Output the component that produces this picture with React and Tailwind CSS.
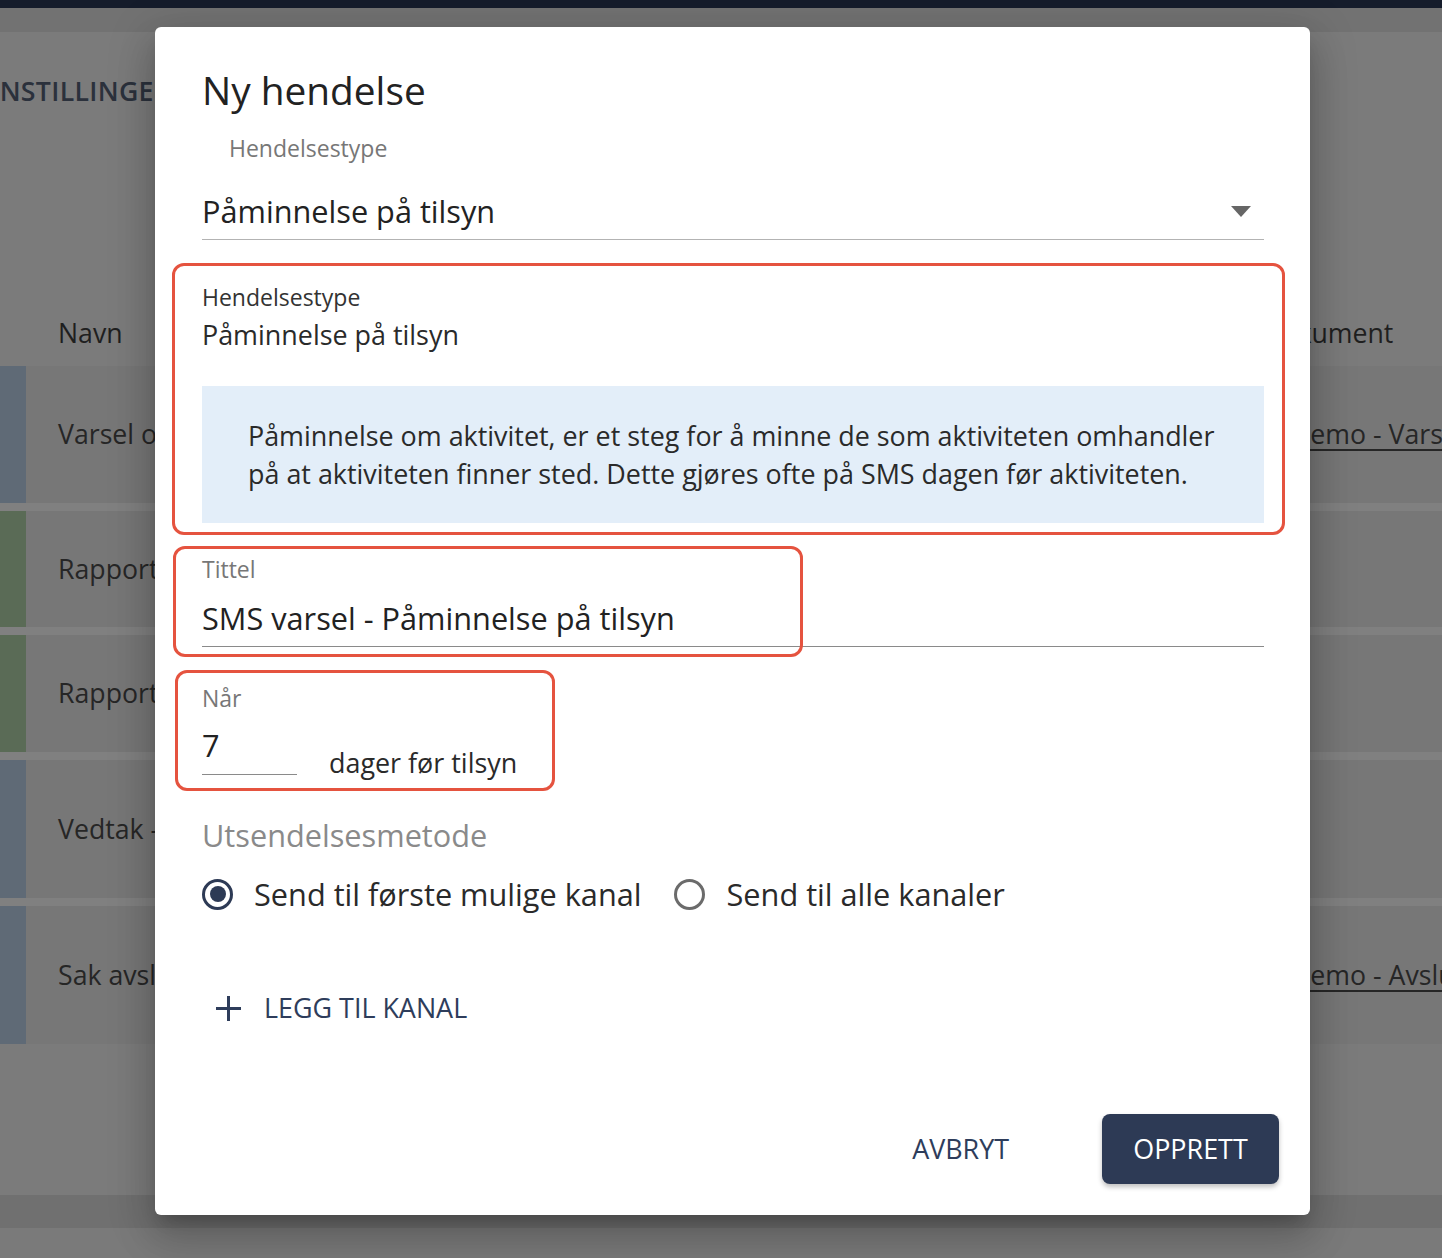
const rows = [
  { h: "h-[137px]", strip: "bg-[#5f6a76]", name: "Varsel om tilsyn", doc: "Demo - Varsel om tilsyn" },
  { h: "h-[116px]", strip: "bg-[#5a6b56]", name: "Rapport fra tilsyn", doc: "" },
  { h: "h-[117px]", strip: "bg-[#5a6b56]", name: "Rapport etter tilsyn", doc: "" },
  { h: "h-[138px]", strip: "bg-[#5f6a76]", name: "Vedtak - pålegg", doc: "" },
  { h: "h-[138px]", strip: "bg-[#5f6a76]", name: "Sak avsluttet", doc: "Demo - Avslutning av sak" },
];

function Background() {
  return (
    <div>
      <div className="h-[8px] bg-[#151c2b]" />
      <div className="h-[24px] bg-[#727272]" />
      <div className="bg-[#7b7b7b]">
        <div className="flex h-[118px] items-center">
          <span className="-ml-[30px] shrink-0 text-[26.7px] font-semibold tracking-[0.3px] uppercase text-[#2b313c] whitespace-nowrap">
            Innstillinger
          </span>
        </div>
        <div className="h-[150px]" />
        <div className="flex h-[66px] items-center text-[26.7px] text-[#1f1f1f]">
          <div className="w-[1262px] shrink-0 pl-[58px]">Navn</div>
          <div className="shrink-0 whitespace-nowrap">Dokument</div>
        </div>
        {rows.map((r, i) => (
          <div key={i}>
            {i > 0 && <div className="h-[8px] bg-[#808080]" />}
            <div className={`flex ${r.h} items-center overflow-hidden bg-[#777777] text-[26.7px] text-[#262626]`}>
              <div className={`h-full w-[26px] shrink-0 ${r.strip}`} />
              <div className="w-[1236px] shrink-0 pl-[32px] whitespace-nowrap">{r.name}</div>
              {r.doc && (
                <div className="shrink-0 pl-[29px] whitespace-nowrap underline decoration-[2px] underline-offset-[5px]">
                  {r.doc}
                </div>
              )}
            </div>
          </div>
        ))}
        <div className="h-[151px]" />
      </div>
      <div className="h-[33px] bg-[#707070]" />
    </div>
  );
}

function RedBox({ className }) {
  return (
    <div
      className={`pointer-events-none absolute rounded-[12px] border-[3px] border-[#e5533f] ${className}`}
    />
  );
}

function Dialog() {
  return (
    <div className="absolute left-[155px] top-[27px] flex h-[1188px] w-[1155px] flex-col rounded-[6px] bg-white shadow-[0_11px_15px_-7px_rgba(0,0,0,0.2),0_24px_38px_3px_rgba(0,0,0,0.14),0_9px_46px_8px_rgba(0,0,0,0.12)]">
      <div className="flex flex-col pl-[47px] pr-[46px]">
        <h2 className="pt-[39px] text-[38.8px] leading-[48px] text-[#222]">Ny hendelse</h2>

        <div className="mt-[19px] pl-[27px] text-[23px] leading-[30px] text-[#777]">Hendelsestype</div>
        <div className="mt-[28px] flex items-center justify-between border-b border-[#b3b3b3] pb-[8px]">
          <span className="text-[30.7px] leading-[40px] text-[#222]">Påminnelse på tilsyn</span>
          <svg width="20" height="11" viewBox="0 0 20 11" className="mr-[13px]">
            <path d="M0 0 L20 0 L10 11 Z" fill="#666" />
          </svg>
        </div>

        <div className="relative mt-[42px]">
          <RedBox className="-top-[19px] -bottom-[12px] -left-[30px] -right-[21px]" />
          <div className="text-[23px] leading-[30px] text-[#333]">Hendelsestype</div>
          <div className="mt-[5px] text-[26.9px] leading-[36px] text-[#2a2a2a]">Påminnelse på tilsyn</div>
          <div className="mt-[33px] bg-[#e3eef9] pl-[46px] pr-[40px] pt-[31px] pb-[30px] text-[26.9px] leading-[38px] text-[#2a2a2a]">
            Påminnelse om aktivitet, er et steg for å minne de som aktiviteten omhandler på at aktiviteten finner
            sted. Dette gjøres ofte på SMS dagen før aktiviteten.
          </div>
        </div>

        <div className="relative mt-[31px]">
          <RedBox className="-top-[8px] -left-[29px] h-[111px] w-[630px]" />
          <div className="text-[23px] leading-[30px] text-[#777]">Tittel</div>
          <div className="mt-[14px] border-b border-[#8a8a8a] pb-[8px] text-[30.7px] leading-[40px] text-[#222]">
            SMS varsel - Påminnelse på tilsyn
          </div>
        </div>

        <div className="relative mt-[36px]">
          <RedBox className="-top-[13px] -left-[27px] h-[121px] w-[380px]" />
          <div className="text-[23px] leading-[30px] text-[#777]">Når</div>
          <div className="flex items-start">
            <div className="mt-[12px] w-[95px] border-b border-[#8a8a8a] pb-[9px] text-[30.7px] leading-[40px] text-[#222]">
              7
            </div>
            <div className="ml-[32px] mt-[32px] text-[26.9px] leading-[36px] text-[#2a2a2a]">dager før tilsyn</div>
          </div>
        </div>

        <div className="mt-[34px] text-[30.7px] leading-[40px] text-[#8a8a8a]">Utsendelsesmetode</div>
        <div className="mt-[19px] flex h-[40px] items-center">
          <span className="flex h-[31px] w-[31px] shrink-0 items-center justify-center rounded-full border-[3px] border-[#2d3a55]">
            <span className="h-[16px] w-[16px] rounded-full bg-[#2d3a55]" />
          </span>
          <span className="ml-[21px] text-[30.7px] leading-[40px] text-[#2a2a2a]">Send til første mulige kanal</span>
          <span className="ml-[32px] h-[31px] w-[31px] shrink-0 rounded-full border-[3px] border-[#6b6b6b]" />
          <span className="ml-[22px] text-[30.7px] leading-[40px] text-[#2a2a2a]">Send til alle kanaler</span>
        </div>

        <div className="mt-[76px] flex h-[36px] items-center pl-[14px] text-[#2e3d5b]">
          <svg width="25" height="25" viewBox="0 0 25 25">
            <path d="M12.5 0 V25 M0 12.5 H25" stroke="#2e3d5b" strokeWidth="3" fill="none" />
          </svg>
          <span className="ml-[23px] text-[26.9px] leading-[36px] uppercase">Legg til kanal</span>
        </div>
      </div>

      <div className="mt-auto flex items-center justify-end pb-[31px] pr-[31px]">
        <span className="mr-[93px] text-[26.9px] uppercase text-[#2e3d5b]">Avbryt</span>
        <button className="flex h-[70px] w-[177px] items-center justify-center rounded-[8px] bg-[#2d3a55] text-[26.9px] uppercase text-white shadow-[0_3px_5px_rgba(0,0,0,0.25)]">
          Opprett
        </button>
      </div>
    </div>
  );
}

export default function App() {
  return (
    <div className="relative h-[1258px] w-full overflow-hidden bg-[#7a7a7a] font-['Open_Sans',sans-serif]">
      <Background />
      <Dialog />
    </div>
  );
}
